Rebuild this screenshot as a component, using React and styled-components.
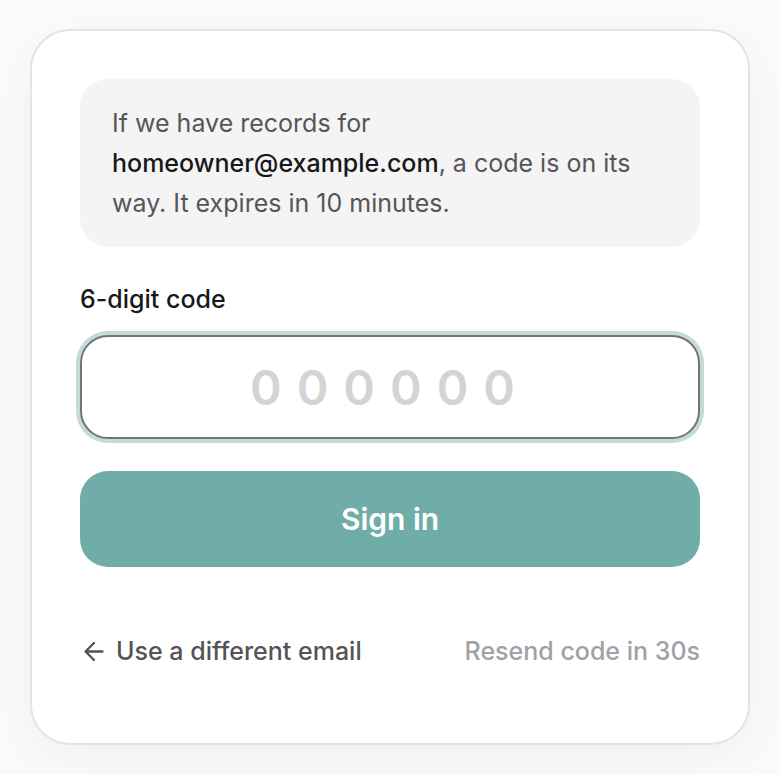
import React, { useState } from "react";
import styled, { createGlobalStyle } from "styled-components";

const GlobalStyle = createGlobalStyle`
  *, *::before, *::after { box-sizing: border-box; }
  body {
    margin: 0;
    background: #fafafa;
    color: #18181b;
    font-family: Inter, "Liberation Sans", sans-serif;
    font-size: 25px;
    line-height: 40px;
    -webkit-font-smoothing: antialiased;
  }
  button, input { font: inherit; }
`;

const Page = styled.main`
  min-height: 100vh;
  padding: 29px 30px;
  overflow: hidden;
`;

const Card = styled.form`
  display: flex;
  flex-direction: column;
  gap: 32px;
  max-width: 720px;
  margin: 0 auto;
  padding: 48px 48px 72px;
  background: #ffffff;
  border: 2px solid #e4e4e5;
  border-radius: 40px;
  box-shadow: 0 16px 48px rgba(0, 0, 0, 0.04);
`;

const Notice = styled.p`
  margin: 0;
  padding: 24px 32px;
  border-radius: 28px;
  background: #f4f4f5;
  color: #565659;
`;

const Email = styled.strong`
  color: #18181b;
  font-weight: 500;
`;

const Field = styled.div`
  display: flex;
  flex-direction: column;
  gap: 16px;
`;

const Label = styled.label`
  font-weight: 500;
`;

const CodeInput = styled.input`
  width: 100%;
  height: 104px;
  padding: 0 24px;
  border: 2px solid #71757a;
  border-radius: 28px;
  outline: none;
  background: #ffffff;
  box-shadow: 0 0 0 4px #c3dcd9;
  color: #18181b;
  font-size: 48px;
  font-weight: 600;
  letter-spacing: 15px;
  text-align: center;

  &::placeholder {
    color: #d4d4d6;
    opacity: 1;
  }
`;

const SubmitButton = styled.button`
  height: 96px;
  border: 0;
  border-radius: 28px;
  background: #70ada8;
  color: #ffffff;
  font-size: 30px;
  font-weight: 600;
  cursor: pointer;
`;

const Footer = styled.div`
  display: flex;
  align-items: center;
  justify-content: space-between;
  padding-top: 32px;
`;

const FooterButton = styled.button`
  display: flex;
  align-items: center;
  gap: 8px;
  padding: 0;
  border: 0;
  background: none;
  color: ${(p) => (p.disabled ? "#a0a1a6" : "#545458")};
  font-weight: 500;
  white-space: nowrap;
  cursor: ${(p) => (p.disabled ? "default" : "pointer")};
`;

const ArrowIcon = () => (
  <svg width="28" height="28" viewBox="0 0 28 28" fill="none" stroke="currentColor" strokeWidth="2.3" strokeLinecap="round" strokeLinejoin="round" aria-hidden="true">
    <path d="M14 6 5.5 14.5 14 23M5.5 14.5H22.5" />
  </svg>
);

export default function App() {
  const [code, setCode] = useState("");
  return (
    <>
      <GlobalStyle />
      <Page>
        <Card onSubmit={(e) => e.preventDefault()}>
          <Notice>
            If we have records for <Email>homeowner@example.com</Email>, a code is on its way. It
            expires in 10 minutes.
          </Notice>
          <Field>
            <Label htmlFor="code">6-digit code</Label>
            <CodeInput
              id="code"
              inputMode="numeric"
              autoComplete="one-time-code"
              maxLength={6}
              placeholder="000000"
              value={code}
              onChange={(e) => setCode(e.target.value)}
            />
          </Field>
          <SubmitButton type="submit">Sign in</SubmitButton>
          <Footer>
            <FooterButton type="button">
              <ArrowIcon />
              Use a different email
            </FooterButton>
            <FooterButton type="button" disabled>
              Resend code in 30s
            </FooterButton>
          </Footer>
        </Card>
      </Page>
    </>
  );
}
